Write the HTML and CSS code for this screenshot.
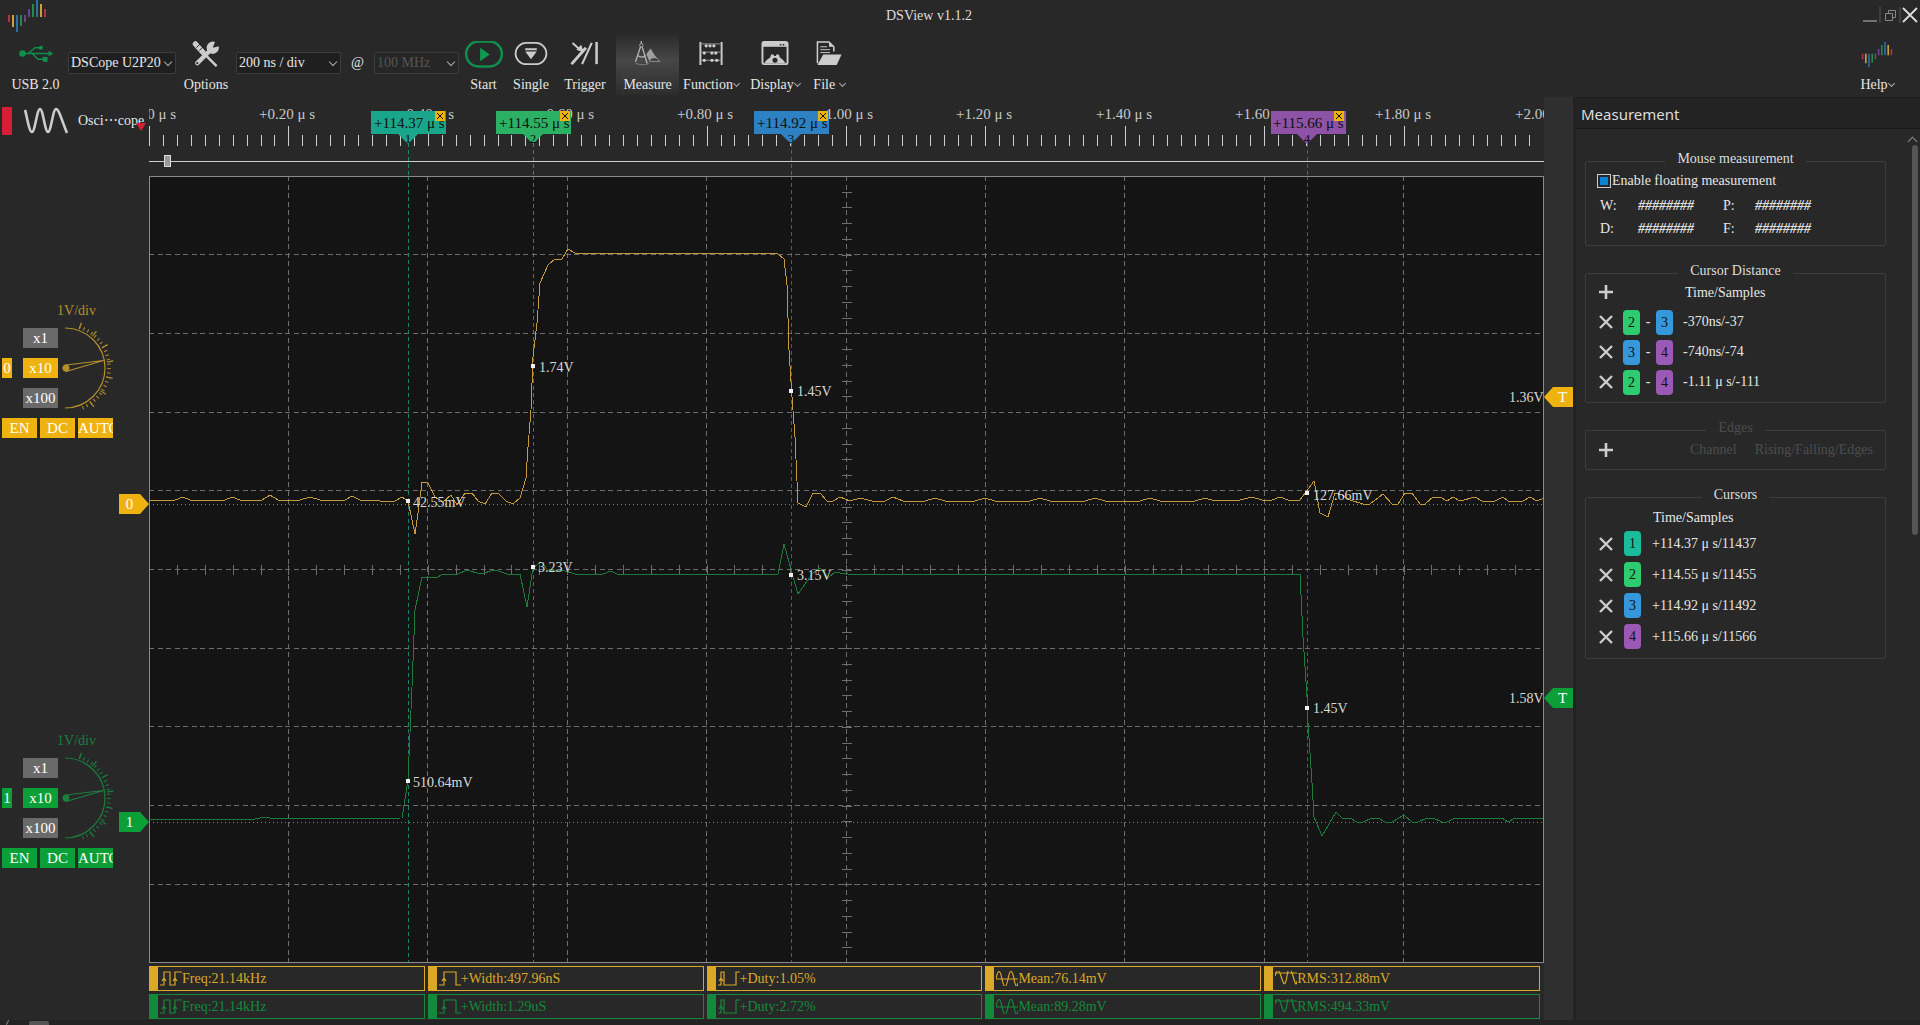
FILE: index.html
```html
<!DOCTYPE html>
<html>
<head>
<meta charset="UTF-8">
<title>DSView v1.1.2</title>
<link rel="stylesheet" href="styles.css">
</head>
<body>

<svg class="defs" width="0" height="0">
    <symbol id="m-freq" viewBox="0 0 22 15"><path d="M0 14H4V1H10V14H15V1H22M2 10l2-3 2 3M13 10l2-3 2 3" fill="none" stroke="currentColor" stroke-width="1.2"/></symbol>
    <symbol id="m-width" viewBox="0 0 22 15"><path d="M0 14H5V1H17V14H22M3 10l2-3 2 3" fill="none" stroke="currentColor" stroke-width="1.2"/></symbol>
    <symbol id="m-duty" viewBox="0 0 22 15"><path d="M0 14H3V1H6V14H18V1H22M1 10l2-3 2 3" fill="none" stroke="currentColor" stroke-width="1.2"/></symbol>
    <symbol id="m-mean" viewBox="0 0 22 15"><path d="M0 8H22M0 8C2 -2 4 -2 6 8S10 18 12 8S16 -2 18 8S21 16 22 12" fill="none" stroke="currentColor" stroke-width="1.2"/></symbol>
    <symbol id="m-rms" viewBox="0 0 22 15"><path d="M0 2H22M0 5C2 -2 4 -2 6 5S10 18 12 5S16 -2 18 5S21 16 22 10" fill="none" stroke="currentColor" stroke-width="1.2"/></symbol>
    <symbol id="i-x" viewBox="0 0 16 16"><path d="M2 2L14 14M14 2L2 14" stroke="#ccc" stroke-width="2.4" fill="none"/></symbol>
    <symbol id="i-plus" viewBox="0 0 16 16"><path d="M8 1V15M1 8H15" stroke="#ccc" stroke-width="2.6" fill="none"/></symbol>
    <symbol id="i-logo" viewBox="0 0 40 32">
        <path d="M2 15V22" stroke="#b5343c" stroke-width="2"/><path d="M6 15V27" stroke="#c9a23a" stroke-width="2"/>
        <path d="M10 15V32" stroke="#2a6fa8" stroke-width="2"/><path d="M14 15V26" stroke="#1f8a4a" stroke-width="2"/>
        <path d="M18 15V22" stroke="#6d4391" stroke-width="2"/><path d="M22 9V17" stroke="#6d4391" stroke-width="2"/>
        <path d="M26 4V17" stroke="#1f8a4a" stroke-width="2"/><path d="M30 0V17" stroke="#2a6fa8" stroke-width="2"/>
        <path d="M34 4V17" stroke="#c9a23a" stroke-width="2"/><path d="M38 9V17" stroke="#b5343c" stroke-width="2"/>
    </symbol>
</svg>

<div class="titlebar">
    <svg class="app-logo" width="40" height="32"><use href="#i-logo"/></svg>
    <div class="app-title">DSView v1.1.2</div>
    <svg class="win-buttons" width="60" height="24" viewBox="0 0 60 24">
        <path d="M3 21H17" stroke="#bbb"/>
        <path d="M20 7V23" stroke="#555"/>
        <path d="M25.5 13.5h7v7h-7zM28.5 13V10.5h7v7H33" fill="none" stroke="#888"/>
        <path d="M40 7V23" stroke="#555"/>
        <path d="M43 8L57 22M57 8L43 22" stroke="#ddd" stroke-width="1.8"/>
    </svg>
</div>

<div class="toolbar">
    <div class="tool tool-usb">
        <svg class="icon" width="36" height="28" viewBox="0 0 36 28">
            <circle cx="4" cy="13" r="3.4" fill="#0f8f4c"/>
            <path d="M4 13H32M10 13L17 7H22M14 13L20 19H26" stroke="#0f8f4c" stroke-width="1.5" fill="none"/>
            <path d="M36 13L31 10V16Z" fill="#0f8f4c"/>
            <circle cx="23" cy="7" r="2.2" fill="#0f8f4c"/>
            <rect x="25" y="16.5" width="5" height="5" fill="#0f8f4c"/>
        </svg>
        <span class="label">USB 2.0</span>
    </div>
    <div class="combo combo-device">DSCope U2P20<i class="chev"></i></div>
    <div class="tool tool-options">
        <svg class="icon" width="28" height="28" viewBox="0 0 28 28">
            <path d="M3 3L11 12" stroke="#ccc" stroke-width="5.5" stroke-linecap="round"/>
            <path d="M11 12L25 26" stroke="#ccc" stroke-width="2.6"/>
            <path d="M5 23L20 8" stroke="#ccc" stroke-width="4.6" stroke-linecap="round"/>
            <circle cx="21" cy="7" r="6.4" fill="#ccc"/>
            <path d="M21 7L24 -1L29 5Z" fill="#282828"/>
            <circle cx="5" cy="23" r="1.1" fill="#282828"/>
            <path d="M4 7L8 3M7 10L11 6" stroke="#282828" stroke-width="1"/>
        </svg>
        <span class="label">Options</span>
    </div>
    <div class="combo combo-time">200 ns / div<i class="chev"></i></div>
    <div class="at">@</div>
    <div class="combo combo-rate">100 MHz<i class="chev"></i></div>
    <div class="tool tool-start">
        <svg class="icon" width="40" height="28" viewBox="0 0 40 28">
            <rect x="1.5" y="0.5" width="37" height="26" rx="13" fill="none" stroke="#0f8f4c" stroke-width="2.6"/>
            <path d="M16 7V21L26 14Z" fill="#0f9a50"/>
        </svg>
        <span class="label">Start</span>
    </div>
    <div class="tool tool-single">
        <svg class="icon" width="34" height="28" viewBox="0 0 34 28">
            <rect x="1" y="2" width="32" height="22" rx="11" fill="none" stroke="#ccc" stroke-width="1.8"/>
            <path d="M11 7.5H23V9.5H11ZM11 11H23L17 19Z" fill="#ccc"/>
        </svg>
        <span class="label">Single</span>
    </div>
    <div class="tool tool-trigger">
        <svg class="icon" width="30" height="28" viewBox="0 0 30 28">
            <path d="M2 2L10 9" stroke="#ccc" stroke-width="2"/>
            <path d="M14 12L6 9L11 4Z" fill="#ccc"/>
            <path d="M1 24L16 7" stroke="#ccc" stroke-width="3"/>
            <path d="M12 24L22 2" stroke="#ccc" stroke-width="2.2"/>
            <path d="M27 1V24" stroke="#ccc" stroke-width="2.6"/>
        </svg>
        <span class="label">Trigger</span>
    </div>
    <div class="tool tool-measure">
        <svg class="icon" width="32" height="30" viewBox="0 0 32 30">
            <circle cx="8" cy="5" r="2" fill="none" stroke="#b4b4b4"/>
            <path d="M8 0V3M7 7L1 25M9 7L15 27M3 17C7 20 11 20 13 17" stroke="#b4b4b4" stroke-width="1.6" fill="none"/>
            <path d="M14 16L19 9L24 17L31 25H18Z" fill="#a0a0a0"/>
            <path d="M18 24A6 6 0 0 1 29 24Z" fill="#444"/>
            <path d="M1 27C8 29 14 29 17 27" stroke="#888" fill="none"/>
        </svg>
        <span class="label">Measure</span>
    </div>
    <div class="tool tool-function">
        <svg class="icon" width="24" height="28" viewBox="0 0 24 28">
            <path d="M1 1V25M23 1V25" stroke="#ccc" stroke-width="2"/>
            <path d="M1 3H23M1 11.5H23M1 20H23" stroke="#999"/>
            <g fill="#ccc">
                <circle cx="7" cy="5" r="1.7"/><circle cx="11" cy="5" r="1.7"/><circle cx="15" cy="5" r="1.7"/>
                <circle cx="5" cy="12.5" r="1.7"/><circle cx="13" cy="12.5" r="1.7"/><circle cx="17" cy="12.5" r="1.7"/>
                <circle cx="5" cy="20" r="1.7"/><circle cx="13" cy="20" r="1.7"/><circle cx="18" cy="20" r="1.7"/>
            </g>
        </svg>
        <span class="label">Function<i class="chev"></i></span>
    </div>
    <div class="tool tool-display">
        <svg class="icon" width="28" height="28" viewBox="0 0 28 28">
            <rect x="1" y="1" width="26" height="23" rx="2" fill="none" stroke="#ccc" stroke-width="2"/>
            <path d="M1 1H27V6H1Z" fill="#ccc"/>
            <path d="M19 3h1.6v1.6H19zM22 3h1.6v1.6H22z" fill="#282828"/>
            <path d="M3 23C5 19 8 18 9 17L10 14H12.500L13 15.500H15L15.500 14H18L19 17C21 18 23 20 25 23Z" fill="#ccc"/>
            <circle cx="14" cy="20" r="2.600" fill="#282828"/>
        </svg>
        <span class="label">Display<i class="chev"></i></span>
    </div>
    <div class="tool tool-file">
        <svg class="icon" width="26" height="28" viewBox="0 0 26 28">
            <path d="M1 23V1H13L18 6V11" fill="none" stroke="#ccc" stroke-width="1.6"/>
            <path d="M4 6H11M4 9H14M4 12H14" stroke="#ccc"/>
            <path d="M7 14H26L21 25H1Z" fill="#ccc"/>
            <path d="M13 1V6H18Z" fill="#ccc"/>
        </svg>
        <span class="label">File <i class="chev"></i></span>
    </div>
    <div class="tool tool-help">
        <svg class="icon" width="32" height="26" viewBox="0 0 40 32"><use href="#i-logo"/></svg>
        <span class="label">Help<i class="chev"></i></span>
    </div>
</div>

<div class="main">
    <div class="rail">
        <div class="rail-head">
            <div class="rail-mark"></div>
            <svg class="rail-wave" width="44" height="28" viewBox="0 0 44 28">
                <path d="M1 3C3 9 5 25 8 25C11 25 13 2 16 2C19 2 21 25 24 25C27 25 29 2 32 2C35 2 38 14 43 26" fill="none" stroke="#ccc" stroke-width="2.6"/>
            </svg>
            <span class="rail-name">Osci⋯cope</span>
            <i class="rail-arrow"></i>
        </div>

        <div class="channel channel-a">
            <div class="ch-title">1V/div</div>
            <div class="ch-body">
                <div class="ch-index">0</div>
                <div class="ch-scales">
                    <div class="ch-btn off">x1</div>
                    <div class="ch-btn">x10</div>
                    <div class="ch-btn off">x100</div>
                </div>
                <svg class="dial" width="55" height="80" viewBox="0 0 55 80">
                    <path d="M7 0A40 40 0 0 1 7 80" fill="none" stroke="currentColor" stroke-width="1.2"/>
                    <path d="M21.300 -0.900A43 43 0 0 1 21.300 80.900" fill="none" stroke="currentColor" stroke-width="3.500" stroke-dasharray="1 3.500"/>
                    <path d="M21.800 -2.300A44.500 44.500 0 0 1 21.800 82.300" fill="none" stroke="currentColor" stroke-width="6.500" stroke-dasharray="1.200 15"/>
                    <path d="M8 37L45.500 32.500L8 43.500Z" fill="none" stroke="currentColor" stroke-width="1.200"/>
                    <circle cx="8" cy="40" r="3.500" fill="currentColor"/>
                </svg>
            </div>
            <div class="ch-modes">
                <div class="ch-btn">EN</div>
                <div class="ch-btn">DC</div>
                <div class="ch-btn">AUTO</div>
            </div>
        </div>

        <div class="channel channel-b">
            <div class="ch-title">1V/div</div>
            <div class="ch-body">
                <div class="ch-index">1</div>
                <div class="ch-scales">
                    <div class="ch-btn off">x1</div>
                    <div class="ch-btn">x10</div>
                    <div class="ch-btn off">x100</div>
                </div>
                <svg class="dial" width="55" height="80" viewBox="0 0 55 80">
                    <path d="M7 0A40 40 0 0 1 7 80" fill="none" stroke="currentColor" stroke-width="1.2"/>
                    <path d="M21.300 -0.900A43 43 0 0 1 21.300 80.900" fill="none" stroke="currentColor" stroke-width="3.500" stroke-dasharray="1 3.500"/>
                    <path d="M21.800 -2.300A44.500 44.500 0 0 1 21.800 82.300" fill="none" stroke="currentColor" stroke-width="6.500" stroke-dasharray="1.200 15"/>
                    <path d="M8 37L45.500 32.500L8 43.500Z" fill="none" stroke="currentColor" stroke-width="1.200"/>
                    <circle cx="8" cy="40" r="3.500" fill="currentColor"/>
                </svg>
            </div>
            <div class="ch-modes">
                <div class="ch-btn">EN</div>
                <div class="ch-btn">DC</div>
                <div class="ch-btn">AUTO</div>
            </div>
        </div>

        <div class="ch-tag tag-a">0</div>
        <div class="ch-tag tag-b">1</div>
    </div>

    <div class="scope">
        <svg class="ruler" width="1395" height="79" viewBox="149 97 1395 79">
            <g class="ruler-text">
                <text x="148" y="119" text-anchor="middle">+0.00 μ s</text>
                <text x="287" y="119" text-anchor="middle">+0.20 μ s</text>
                <text x="426" y="119" text-anchor="middle">+0.40 μ s</text>
                <text x="566" y="119" text-anchor="middle">+0.60 μ s</text>
                <text x="705" y="119" text-anchor="middle">+0.80 μ s</text>
                <text x="845" y="119" text-anchor="middle">+1.00 μ s</text>
                <text x="984" y="119" text-anchor="middle">+1.20 μ s</text>
                <text x="1124" y="119" text-anchor="middle">+1.40 μ s</text>
                <text x="1263" y="119" text-anchor="middle">+1.60 μ s</text>
                <text x="1403" y="119" text-anchor="middle">+1.80 μ s</text>
                <text x="1543" y="119" text-anchor="middle">+2.00 μ s</text>
            </g>
            <path class="tick" d="M149 140.500H1536" stroke-width="11" stroke-dasharray="1 12.940"/>
            <path class="tick" d="M149 136H1536" stroke-width="20" stroke-dasharray="1 138.400"/>
            <path class="tick" d="M149 161.500H1544"/>
            <rect x="164.500" y="155.500" width="6" height="11" fill="#999" stroke="#ddd"/>

            <path class="cur-line c1" d="M408.500 143V176"/>
            <path class="cur-line c2" d="M533.500 143V176"/>
            <path class="cur-line c3" d="M791.500 143V176"/>
            <path class="cur-line c4" d="M1307.500 143V176"/>

            <g class="cur-flag c1">
                <rect x="371" y="111" width="75" height="23"/><path d="M398 134H418L408 144Z"/>
                <text class="cur-text" x="374" y="128">+114.37 μ s</text><text class="cur-num" x="408" y="143">1</text>
                <rect class="cur-close" x="435" y="111" width="10" height="10"/><path class="cur-x" d="M437 113L443 119M443 113L437 119"/>
            </g>
            <g class="cur-flag c2">
                <rect x="496" y="111" width="75" height="23"/><path d="M523 134H543L533 144Z"/>
                <text class="cur-text" x="499" y="128">+114.55 μ s</text><text class="cur-num" x="533" y="143">2</text>
                <rect class="cur-close" x="560" y="111" width="10" height="10"/><path class="cur-x" d="M562 113L568 119M568 113L562 119"/>
            </g>
            <g class="cur-flag c3">
                <rect x="754" y="111" width="75" height="23"/><path d="M781 134H801L791 144Z"/>
                <text class="cur-text" x="757" y="128">+114.92 μ s</text><text class="cur-num" x="791" y="143">3</text>
                <rect class="cur-close" x="818" y="111" width="10" height="10"/><path class="cur-x" d="M820 113L826 119M826 113L820 119"/>
            </g>
            <g class="cur-flag c4">
                <rect x="1271" y="111" width="75" height="23"/><path d="M1297 134H1317L1307 144Z"/>
                <text class="cur-text" x="1273" y="128">+115.66 μ s</text><text class="cur-num" x="1307" y="143">4</text>
                <rect class="cur-close" x="1334" y="111" width="10" height="10"/><path class="cur-x" d="M1336 113L1342 119M1342 113L1336 119"/>
            </g>
        </svg>

        <svg class="plot" width="1395" height="787" viewBox="149 176 1395 787">
            <rect x="149" y="176" width="1395" height="787" fill="#141414"/>
            <g class="grid">
                <path d="M288.500 176V963M427.500 176V963M567.500 176V963M706.500 176V963M846.500 176V963M985.500 176V963M1124.500 176V963M1264.500 176V963M1403.500 176V963"/>
                <path d="M149 254.500H1544M149 333.500H1544M149 412.500H1544M149 490.500H1544M149 569.500H1544M149 648.500H1544M149 726.500H1544M149 805.500H1544M149 884.500H1544"/>
            </g>
            <path class="grid-tick" d="M149 569.500H1544" stroke-width="10" stroke-dasharray="1 26.880"/>
            <path class="grid-tick" d="M846.500 176V963" stroke-width="10" stroke-dasharray="1 14.740"/>
            <path class="zero" d="M149 504.500H1544M149 822.500H1544"/>

            <path class="cur-line c1" d="M408.500 176V963"/>
            <path class="cur-line c2" d="M533.500 176V963"/>
            <path class="cur-line c3" d="M791.500 176V963"/>
            <path class="cur-line c4" d="M1307.500 176V963"/>

            <polyline class="trace trace-a" points="149,500 175,500 183,497 190,500 225,500 232,497 240,500 262,500 270,495 278,500 300,500 310,497 320,500 345,500 352,496 360,500 380,501 395,501 402,497 408,501 415,534 418,513 422,482 428,483 435,497 443,502 451,495 457,505 465,493 472,493 478,501 485,504 492,493 498,493 506,501 513,504 520,498 526,478 528,447 531,410 533,357 537,323 540,283 548,265 555,259 562,259 568,249 575,253 777,253 784,259 787,285 789,350 792,397 795,437 798,503 806,507 813,493 820,493 827,501 833,501 840,497 850,501 860,498 872,501 885,501 893,497 903,501 925,501 935,498 945,501 975,501 985,498 995,501 1030,501 1040,498 1050,501 1085,501 1095,498 1105,501 1140,501 1150,498 1160,501 1195,501 1205,498 1215,501 1240,500 1252,497 1262,500 1272,500 1280,497 1288,500 1300,500 1314,481 1320,513 1328,517 1335,493 1342,495 1350,500 1363,504 1370,504 1383,494 1392,504 1398,504 1405,493 1412,493 1420,504 1425,504 1433,497 1440,497 1447,501 1453,497 1460,501 1475,497 1482,501 1495,501 1503,497 1508,501 1523,501 1530,497 1537,501 1544,498"/>
            <polyline class="trace trace-b" points="149,819 255,819 265,817 275,819 402,818 408,780 410,733 412,687 415,610 422,577 438,577 443,574 458,574 467,570 480,574 495,570 507,574 520,574 527,607 533,568 541,562 548,570 562,570 575,574 603,574 611,571 617,574 778,574 784,544 792,573 798,594 812,574 820,568 828,578 835,572 840,573 848,574 1300,574 1303,637 1307,697 1308,723 1312,783 1314,817 1322,836 1336,812 1342,818 1350,818 1357,822 1363,822 1372,818 1378,818 1385,822 1392,822 1404,815 1412,822 1418,822 1427,818 1433,818 1442,822 1447,822 1455,818 1502,818 1508,822 1515,818 1544,819"/>

            <g class="marks">
                <rect x="406" y="499" width="4" height="4"/><rect x="531" y="364" width="4" height="4"/><rect x="789" y="389" width="4" height="4"/>
                <rect x="531" y="565" width="4" height="4"/><rect x="789" y="573" width="4" height="4"/><rect x="406" y="779" width="4" height="4"/>
                <rect x="1305" y="491" width="4" height="4"/><rect x="1305" y="706" width="4" height="4"/>
            </g>
            <g class="readout">
                <text x="539" y="372">1.74V</text>
                <text x="797" y="396">1.45V</text>
                <text x="413" y="507">42.55mV</text>
                <text x="538" y="572">3.23V</text>
                <text x="797" y="580">3.15V</text>
                <text x="413" y="787">510.64mV</text>
                <text x="1313" y="500">127.66mV</text>
                <text x="1313" y="713">1.45V</text>
                <text x="1509" y="402">1.36V</text>
                <text x="1509" y="703">1.58V</text>
            </g>
        </svg>

        <div class="measures">
            <div class="m-cell m-a"><svg class="m-icon"><use href="#m-freq"/></svg>Freq:21.14kHz</div>
            <div class="m-cell m-a"><svg class="m-icon"><use href="#m-width"/></svg>+Width:497.96nS</div>
            <div class="m-cell m-a"><svg class="m-icon"><use href="#m-duty"/></svg>+Duty:1.05%</div>
            <div class="m-cell m-a"><svg class="m-icon"><use href="#m-mean"/></svg>Mean:76.14mV</div>
            <div class="m-cell m-a"><svg class="m-icon"><use href="#m-rms"/></svg>RMS:312.88mV</div>
            <div class="m-cell m-b"><svg class="m-icon"><use href="#m-freq"/></svg>Freq:21.14kHz</div>
            <div class="m-cell m-b"><svg class="m-icon"><use href="#m-width"/></svg>+Width:1.29uS</div>
            <div class="m-cell m-b"><svg class="m-icon"><use href="#m-duty"/></svg>+Duty:2.72%</div>
            <div class="m-cell m-b"><svg class="m-icon"><use href="#m-mean"/></svg>Mean:89.28mV</div>
            <div class="m-cell m-b"><svg class="m-icon"><use href="#m-rms"/></svg>RMS:494.33mV</div>
        </div>
    </div>

    <div class="trig-col">
        <div class="trig trig-a">T</div>
        <div class="trig trig-b">T</div>
    </div>
    <div class="dock-gap"></div>

    <div class="dock">
        <div class="dock-title">Measurement</div>
        <div class="dock-body">
            <fieldset class="group group-mouse">
                <legend>Mouse measurement</legend>
                <div class="check-row"><i class="check"></i>Enable floating measurement</div>
                <div class="mouse-grid">
                    <span>W:</span><span class="hash">########</span><span>P:</span><span class="hash">########</span>
                    <span>D:</span><span class="hash">########</span><span>F:</span><span class="hash">########</span>
                </div>
            </fieldset>

            <fieldset class="group group-distance">
                <legend>Cursor Distance</legend>
                <div class="dist-grid">
                    <svg class="ctl" width="16" height="16"><use href="#i-plus"/></svg>
                    <span class="dist-head">Time/Samples</span>

                    <svg class="ctl" width="16" height="16"><use href="#i-x"/></svg>
                    <span class="chip c2">2</span><span class="dash">-</span><span class="chip c3">3</span>
                    <span class="dist-val">-370ns/-37</span>

                    <svg class="ctl" width="16" height="16"><use href="#i-x"/></svg>
                    <span class="chip c3">3</span><span class="dash">-</span><span class="chip c4">4</span>
                    <span class="dist-val">-740ns/-74</span>

                    <svg class="ctl" width="16" height="16"><use href="#i-x"/></svg>
                    <span class="chip c2">2</span><span class="dash">-</span><span class="chip c4">4</span>
                    <span class="dist-val">-1.11 μ s/-111</span>
                </div>
            </fieldset>

            <fieldset class="group group-edges">
                <legend>Edges</legend>
                <div class="edge-row">
                    <svg class="ctl" width="16" height="16"><use href="#i-plus"/></svg>
                    <span class="edge-ch">Channel</span>
                    <span class="edge-kind">Rising/Falling/Edges</span>
                </div>
            </fieldset>

            <fieldset class="group group-cursors">
                <legend>Cursors</legend>
                <div class="cur-grid">
                    <span class="cur-head">Time/Samples</span>

                    <svg class="ctl" width="16" height="16"><use href="#i-x"/></svg>
                    <span class="chip c1">1</span><span class="cur-val">+114.37 μ s/11437</span>

                    <svg class="ctl" width="16" height="16"><use href="#i-x"/></svg>
                    <span class="chip c2">2</span><span class="cur-val">+114.55 μ s/11455</span>

                    <svg class="ctl" width="16" height="16"><use href="#i-x"/></svg>
                    <span class="chip c3">3</span><span class="cur-val">+114.92 μ s/11492</span>

                    <svg class="ctl" width="16" height="16"><use href="#i-x"/></svg>
                    <span class="chip c4">4</span><span class="cur-val">+115.66 μ s/11566</span>
                </div>
            </fieldset>
        </div>
        <i class="scroll-up"></i>
        <div class="scroll-thumb"></div>
    </div>
</div>

<div class="statusbar"><i class="status-mark"></i><div class="status-handle"></div></div>

</body>
</html>
```

FILE: styles.css
```css
html, body {
    margin: 0;
    padding: 0;
    height: 100%;
    overflow: hidden;
}
body {
    width: 1920px;
    height: 1025px;
    background-color: #282828;
    color: #e6e6e6;
    font-family: "Liberation Serif", serif;
    font-size: 14px;
}
.defs {
    position: absolute;
}
svg {
    display: block;
}

/* title bar */
.titlebar {
    height: 32px;
    display: flex;
}
.app-logo {
    margin-left: 7px;
}
.app-title {
    margin-left: 839px;
    line-height: 32px;
    color: #ddd;
}
.win-buttons {
    margin-left: auto;
}

/* toolbar */
.toolbar {
    height: 65px;
    padding-left: 3px;
    display: flex;
    align-items: flex-start;
}
.tool {
    display: flex;
    flex-direction: column;
    align-items: center;
    height: 63px;
    padding-top: 9px;
    box-sizing: border-box;
}
.tool .icon {
    height: 28px;
}
.tool .label {
    margin-top: 7px;
    line-height: 20px;
    white-space: nowrap;
}
.tool-usb { width: 65px; }
.tool-options { width: 60px; }
.tool-start { width: 49px; }
.tool-single { width: 46px; }
.tool-trigger { width: 62px; }
.tool-measure {
    width: 63px;
    background: linear-gradient(#282828, #474747 45%, #2c2c2c);
}
.tool-measure .label {
    margin-top: 9px;
}
.tool-function { width: 64px; }
.tool-display { width: 64px; }
.tool-file { width: 44px; }
.tool-help {
    width: 60px;
    margin-left: auto;
    margin-right: 13px;
}
.combo {
    height: 22px;
    margin-top: 20px;
    padding-left: 2px;
    box-sizing: border-box;
    background-color: #1f1f1f;
    border: 1px solid #3c3c3c;
    border-radius: 2px;
    line-height: 20px;
    display: flex;
    align-items: center;
    justify-content: space-between;
    white-space: nowrap;
}
.combo-device { width: 108px; }
.combo-time { width: 105px; }
.combo-rate {
    width: 85px;
    background-color: #262626;
    color: #555;
}
.at {
    width: 33px;
    margin-top: 20px;
    line-height: 22px;
    text-align: center;
}
.chev {
    display: inline-block;
    width: 5px;
    height: 5px;
    margin: 0 4px 3px 2px;
    border-right: 1px solid #aaa;
    border-bottom: 1px solid #aaa;
    transform: rotate(45deg);
}
.label .chev {
    margin: 0 0 3px 1px;
    width: 4px;
    height: 4px;
}

.main {
    height: 923px;
    display: flex;
}

/* left rail with the channel controls */
.rail {
    width: 149px;
    flex-shrink: 0;
    position: relative;
}
.rail-head {
    height: 28px;
    padding: 10px 0 0 2px;
    display: flex;
    position: relative;
}
.rail-mark {
    width: 10px;
    height: 28px;
    background-color: #d81e36;
    border-radius: 1px;
}
.rail-wave {
    margin-left: 12px;
}
.rail-name {
    margin-left: 10px;
    line-height: 28px;
}
.rail-arrow {
    position: absolute;
    left: 136px;
    top: 26px;
    border-left: 5px solid transparent;
    border-right: 5px solid transparent;
    border-top: 8px solid #d81e36;
}
.channel-a {
    margin-top: 168px;
    color: #b58f2c;
    --ch-color: #eeb211;
}
.channel-b {
    margin-top: 295px;
    color: #1a7f3e;
    --ch-color: #0a9f37;
}
.channel {
    width: 115px;
    padding-left: 2px;
}
.ch-title {
    height: 16px;
    line-height: 16px;
    text-align: center;
    padding-left: 38px;
    padding-right: 4px;
    font-size: 14px;
}
.ch-body {
    margin-top: 9px;
    display: flex;
}
.ch-index {
    width: 10px;
    height: 20px;
    margin-top: 30px;
    margin-right: 11px;
    background-color: var(--ch-color);
    color: #fff;
    line-height: 20px;
    text-align: center;
    font-size: 15px;
}
.ch-scales {
    width: 35px;
    display: flex;
    flex-direction: column;
    gap: 10px;
}
.dial {
    margin-left: 0;
    overflow: visible;
}
.ch-btn {
    width: 35px;
    height: 20px;
    background-color: var(--ch-color);
    color: #fff;
    line-height: 20px;
    text-align: center;
    font-size: 15px;
    overflow: hidden;
    white-space: nowrap;
}
.ch-btn.off {
    background-color: #6a6a6a;
}
.ch-modes {
    margin-top: 10px;
    display: flex;
    gap: 3px;
}
.ch-tag {
    position: absolute;
    left: 119px;
    width: 30px;
    height: 20px;
    padding-right: 9px;
    box-sizing: border-box;
    clip-path: polygon(0 0, 21px 0, 30px 10px, 21px 20px, 0 20px);
    color: #fff;
    line-height: 20px;
    text-align: center;
    font-size: 15px;
}
.tag-a {
    top: 397px;
    background-color: #eeb211;
}
.tag-b {
    top: 715px;
    background-color: #0a9f37;
}

/* scope */
.scope {
    width: 1395px;
    flex-shrink: 0;
}
.ruler-text {
    fill: #c8c8c8;
    font-size: 15px;
}
.tick {
    stroke: #cfcfcf;
    fill: none;
    shape-rendering: crispEdges;
}
.c1 { --cur: #1aa68b; --chip: #1abc9c; }
.c2 { --cur: #2bb064; --chip: #2ecc71; }
.c3 { --cur: #2e82c4; --chip: #3498db; }
.c4 { --cur: #8e52a6; --chip: #9b59b6; }
.cur-line {
    stroke: var(--cur);
    stroke-dasharray: 4 3;
    fill: none;
    shape-rendering: crispEdges;
    opacity: 0.75;
}
.cur-flag {
    fill: var(--cur);
}
.cur-text {
    fill: #101010;
    font-size: 15px;
}
.cur-num {
    fill: #101010;
    font-size: 13px;
    text-anchor: middle;
}
.cur-flag .cur-close {
    fill: #eeb211;
}
.cur-x {
    stroke: #111;
    fill: none;
}
.grid path {
    stroke: #6e6e6e;
    stroke-dasharray: 5 3.500;
    fill: none;
    shape-rendering: crispEdges;
}
.grid-tick {
    stroke: #6e6e6e;
    fill: none;
    shape-rendering: crispEdges;
}
.zero {
    stroke: #808080;
    stroke-dasharray: 1 3;
    fill: none;
    shape-rendering: crispEdges;
}
.plot {
    outline: 1px solid #8a8a8a;
    outline-offset: -1px;
}
.trace {
    fill: none;
    stroke-width: 1;
    shape-rendering: crispEdges;
}
.trace-a {
    stroke: #c49a3c;
}
.trace-b {
    stroke: #1c7a3a;
}
.marks rect {
    fill: #f0f0f0;
}
.readout {
    fill: #d8d8d8;
    font-size: 14px;
}

/* measure results below the plot */
.measures {
    margin-top: 3px;
    width: 1391px;
    display: grid;
    grid-template-columns: repeat(5, 1fr);
    column-gap: 3px;
    row-gap: 3px;
}
.m-cell {
    height: 25px;
    box-sizing: border-box;
    border: 1px solid;
    border-left-width: 9px;
    display: flex;
    align-items: center;
    white-space: nowrap;
    line-height: 23px;
}
.m-a {
    color: #dca827;
    border-color: #dca827;
}
.m-b {
    color: #138a3b;
    border-color: #138a3b;
}
.m-icon {
    width: 22px;
    height: 15px;
    margin-left: 2px;
}

.trig-col {
    width: 29px;
    flex-shrink: 0;
    background-color: #2f2f2f;
    position: relative;
}
.trig {
    position: absolute;
    left: 0;
    width: 29px;
    height: 20px;
    padding-left: 8px;
    box-sizing: border-box;
    clip-path: polygon(0 10px, 9px 0, 29px 0, 29px 20px, 9px 20px);
    color: #fff;
    line-height: 20px;
    text-align: center;
    font-size: 15px;
}
.trig-a {
    top: 290px;
    background-color: #eeb211;
}
.trig-b {
    top: 591px;
    background-color: #0a9f37;
}
.dock-gap {
    width: 3px;
    flex-shrink: 0;
    background-color: #222;
}

/* measurement dock */
.dock {
    width: 344px;
    flex-shrink: 0;
    position: relative;
}
.dock-title {
    height: 32px;
    box-sizing: border-box;
    padding-left: 5px;
    background-color: #232323;
    border-top: 1px solid #1b1b1b;
    border-bottom: 1px solid #1b1b1b;
    line-height: 32px;
    font-family: "Noto Sans", sans-serif;
    font-size: 15px;
    color: #ddd;
}
.dock-body {
    padding: 22px 0 0 9px;
}
.group {
    width: 301px;
    box-sizing: border-box;
    margin: 0 0 17px 0;
    padding: 0;
    border: 1px solid #3c3c3c;
    border-radius: 2px;
    min-width: 0;
}
.group legend {
    margin: 0 auto;
    padding: 0 12px;
    line-height: 20px;
    color: #ddd;
    position: relative;
    top: -2px;
}
.group-edges legend {
    color: #4d4d4d;
}
.check-row {
    height: 20px;
    padding-left: 11px;
    display: flex;
    align-items: center;
    white-space: nowrap;
}
.check {
    width: 14px;
    height: 14px;
    box-sizing: border-box;
    border: 1px solid #ccc;
    background-color: #0a84d6;
    background-clip: content-box;
    padding: 2px;
    margin-right: 1px;
    flex-shrink: 0;
}
.mouse-grid {
    margin: 3px 0 5px 14px;
    display: grid;
    grid-template-columns: 38px 85px 32px auto;
    grid-auto-rows: 23px;
    line-height: 23px;
}
.hash {
    font-style: italic;
    font-weight: bold;
    letter-spacing: 0;
    color: #ddd;
}
.ctl {
    justify-self: start;
    align-self: center;
}
.chip {
    display: block;
    width: 17px;
    height: 25px;
    border-radius: 4px;
    background-color: var(--chip);
    color: #111;
    line-height: 25px;
    text-align: center;
    align-self: center;
}
.dist-grid {
    margin-left: 12px;
    padding-bottom: 5px;
    display: grid;
    grid-template-columns: 25px 17px 16px 17px 1fr;
    grid-template-rows: 24px repeat(3, 30px);
    align-items: center;
}
.dist-grid .ctl:first-child {
    align-self: start;
    margin-top: 1px;
}
.dist-head {
    grid-column: 2 / -1;
    padding-left: 62px;
    align-self: start;
    line-height: 20px;
}
.dash {
    text-align: center;
}
.dist-val {
    padding-left: 10px;
    white-space: nowrap;
}
.edge-row {
    height: 20px;
    margin-left: 12px;
    padding-bottom: 9px;
    display: flex;
    align-items: center;
    color: #4d4d4d;
    box-sizing: content-box;
}
.edge-ch {
    margin-left: 76px;
}
.edge-kind {
    margin-left: 18px;
    white-space: nowrap;
}
.cur-grid {
    margin-left: 12px;
    padding-bottom: 6px;
    display: grid;
    grid-template-columns: 26px 17px 1fr;
    grid-template-rows: 21px repeat(4, 31px);
    align-items: center;
}
.cur-head {
    grid-column: 1 / -1;
    padding-left: 55px;
}
.cur-val {
    padding-left: 11px;
    white-space: nowrap;
}
.scroll-up {
    position: absolute;
    right: 4px;
    top: 41px;
    width: 6px;
    height: 6px;
    border-left: 1px solid #888;
    border-top: 1px solid #888;
    transform: rotate(45deg);
}
.scroll-thumb {
    position: absolute;
    right: 2px;
    top: 48px;
    width: 6px;
    height: 390px;
    background-color: #555;
    border-radius: 3px;
}

.statusbar {
    height: 5px;
    background-color: #232323;
    position: relative;
    overflow: hidden;
}
.status-handle {
    position: absolute;
    left: 29px;
    top: 1px;
    width: 20px;
    height: 6px;
    background-color: #555;
    border-radius: 2px;
}
.status-mark {
    position: absolute;
    left: 7px;
    top: 0;
    width: 1px;
    height: 5px;
    background-color: #888;
    transform: rotate(30deg);
}
```
